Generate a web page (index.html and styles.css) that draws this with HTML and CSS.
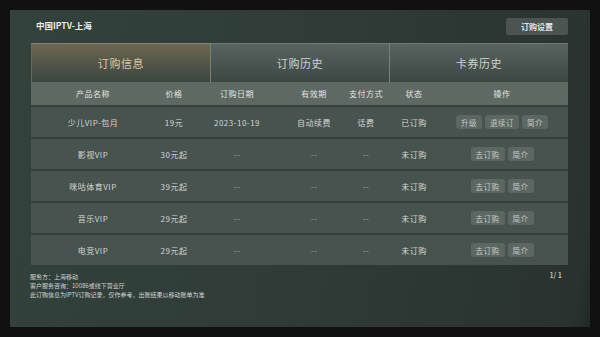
FILE: index.html
```html
<!DOCTYPE html>
<html lang="zh-CN">
<head>
  <meta charset="UTF-8" />
  <title>订购信息</title>
  <link rel="stylesheet" href="styles.css">
</head>
<body>
  <div class="screen">
    <div class="topbar">
      <span class="title">中国IPTV-上海</span>
      <button class="settings">订购设置</button>
    </div>

    <div class="tabs">
      <div class="tab active">订购信息</div>
      <div class="tab">订购历史</div>
      <div class="tab">卡券历史</div>
    </div>

    <div class="table">
      <div class="row head">
        <span>产品名称</span><span>价格</span><span>订购日期</span><span>有效期</span><span>支付方式</span><span>状态</span><span>操作</span>
      </div>
      <div class="row">
        <span>少儿VIP-包月</span><span>19元</span><span>2023-10-19</span><span>自动续费</span><span>话费</span><span>已订购</span>
        <span class="ops"><button>升级</button><button>退续订</button><button>简介</button></span>
      </div>
      <div class="row">
        <span>影视VIP</span><span>30元起</span><span class="dim">--</span><span class="dim">--</span><span class="dim">--</span><span>未订购</span>
        <span class="ops"><button>去订购</button><button>简介</button></span>
      </div>
      <div class="row">
        <span>咪咕体育VIP</span><span>39元起</span><span class="dim">--</span><span class="dim">--</span><span class="dim">--</span><span>未订购</span>
        <span class="ops"><button>去订购</button><button>简介</button></span>
      </div>
      <div class="row">
        <span>音乐VIP</span><span>29元起</span><span class="dim">--</span><span class="dim">--</span><span class="dim">--</span><span>未订购</span>
        <span class="ops"><button>去订购</button><button>简介</button></span>
      </div>
      <div class="row">
        <span>电竞VIP</span><span>29元起</span><span class="dim">--</span><span class="dim">--</span><span class="dim">--</span><span>未订购</span>
        <span class="ops"><button>去订购</button><button>简介</button></span>
      </div>
    </div>

    <div class="footer">
      <div class="notes">
        <p>服务方：上海移动</p>
        <p>客户服务咨询：10086或线下营业厅</p>
        <p>此订购信息为IPTV订购记录，仅作参考，出账结果以移动账单为准</p>
      </div>
      <span class="pager">1/ 1</span>
    </div>
  </div>
</body>
</html>
```

FILE: styles.css
```css
html, body {
  margin: 0;
  height: 100%;
}
body {
  background: #111;
  font-family: "Noto Sans CJK SC", "Noto Sans", sans-serif;
  padding: 10px;
  box-sizing: border-box;
  width: 600px;
  height: 337px;
}
.screen {
  width: 580px;
  height: 317px;
  box-sizing: border-box;
  padding: 8px 22px 0 21px;
  background: linear-gradient(100deg, #33423c 0%, #2e3a36 60%, #29322f 97%, #222927 100%);
}
.topbar {
  display: flex;
  justify-content: space-between;
  align-items: flex-start;
  height: 17px;
  padding-left: 5px;
}
.title {
  color: #eee;
  font-size: 8.5px;
  font-weight: bold;
  line-height: 14px;
}
.settings {
  width: 62px;
  height: 17px;
  border: none;
  border-radius: 2px;
  background: #4b5451;
  color: #e4e4e4;
  font-family: inherit;
  font-size: 8px;
  font-weight: bold;
  padding: 0;
}
.tabs {
  display: flex;
  margin-top: 8px;
  height: 39px;
}
.tab {
  flex: 1;
  display: flex;
  align-items: center;
  justify-content: center;
  font-size: 11px;
  letter-spacing: 0.6px;
  color: #cfd3d1;
  background: linear-gradient(#59645f, #3b4743);
  border-top: 1px solid #6f7a76;
  border-left: 1px solid #76817c;
}
.tab:first-child {
  border-left-color: #6b6857;
}
.tab.active {
  color: #dcc9a0;
  background: linear-gradient(#6d6751, #3a4540);
  border-top-color: #8a8268;
}
.table {
  background: #36403c;
}
.row {
  display: grid;
  grid-template-columns: 124px 38px 88px 66px 38px 58px 118px 1fr;
  align-items: center;
  height: 30px;
  border-top: 2px solid #35403b;
  background: #47534e;
  color: #d2d6d4;
  font-size: 8px;
  letter-spacing: 0.5px;
}
.row span {
  text-align: center;
  white-space: nowrap;
}
.row.head {
  height: 23px;
  border-top: none;
  background: #5e6964;
  color: #e2e5e3;
}
.row .dim {
  color: #9aa29e;
}
.ops {
  display: flex;
  justify-content: center;
  gap: 3px;
}
.ops button {
  height: 14px;
  padding: 0 5px;
  border: none;
  border-radius: 3px;
  background: #5c6763;
  color: #c3c8c5;
  font-family: inherit;
  font-size: 7.5px;
  letter-spacing: 0.5px;
}
.footer {
  display: flex;
  justify-content: space-between;
  align-items: flex-start;
  padding-top: 6px;
}
.notes {
  padding-top: 1px;
  margin-left: -1px;
}
.notes p {
  margin: 0;
  color: #d0d4d2;
  font-size: 6px;
  line-height: 9px;
}
.pager {
  color: #b7bdba;
  font-size: 7px;
  font-weight: bold;
  margin-right: 6px;
  line-height: 8px;
}
```
